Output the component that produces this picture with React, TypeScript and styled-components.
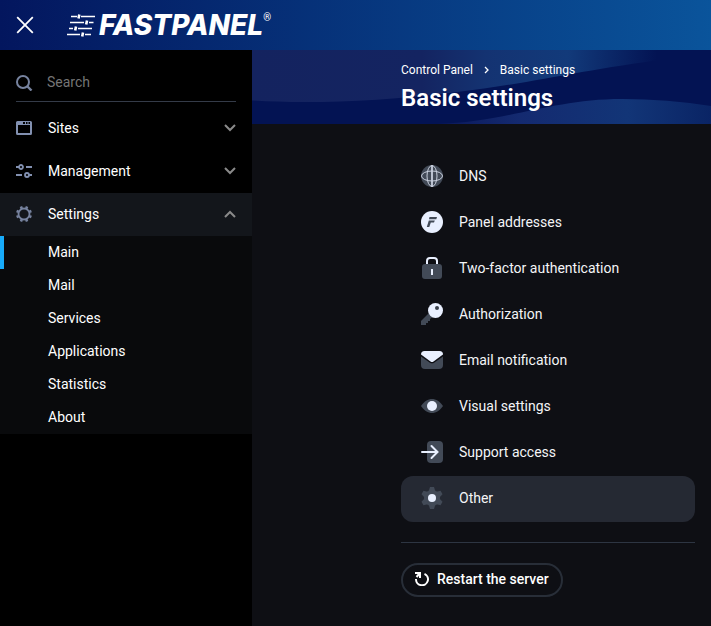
import React from "react";
import styled, { createGlobalStyle } from "styled-components";

const Global = createGlobalStyle`
  *, *::before, *::after { box-sizing: border-box; }
  body {
    margin: 0;
    background: #0e0f14;
    color: #fff;
    font-family: Roboto, "Liberation Sans", sans-serif;
    font-size: 14px;
    line-height: 20px;
  }
  ul, ol { list-style: none; margin: 0; padding: 0; }
  a { color: inherit; text-decoration: none; }
  button { font: inherit; color: inherit; background: none; border: 0; padding: 0; cursor: pointer; }
  svg { display: block; flex: none; }
`;

const Page = styled.div`
  min-height: 100vh;
  display: flex;
  flex-direction: column;
`;

const TopBar = styled.header`
  height: 50px;
  flex: none;
  display: flex;
  align-items: center;
  gap: 33px;
  padding: 0 16px;
  background: linear-gradient(90deg, #03165e 0%, #0a549b 100%);
`;

const Logo = styled.a`
  display: flex;
  align-items: center;
  color: #fff;
`;

const LogoText = styled.span`
  margin-left: 4px;
  font-family: Inter, "Liberation Sans", sans-serif;
  font-size: 28px;
  line-height: 34px;
  font-weight: 800;
  font-style: italic;
`;

const Registered = styled.span`
  align-self: flex-start;
  font-size: 10px;
  line-height: 20px;
`;

const Body = styled.div`
  flex: 1;
  display: flex;
`;

const Sidebar = styled.aside`
  width: 252px;
  flex: none;
  padding-top: 12px;
  background: #000;
`;

const SearchBox = styled.label`
  display: flex;
  align-items: center;
  gap: 14px;
  height: 40px;
  margin: 0 16px 5px;
  border-bottom: 1px solid #343b48;
`;

const SearchInput = styled.input`
  flex: 1;
  min-width: 0;
  padding: 0;
  border: 0;
  outline: 0;
  background: none;
  color: #fff;
  font: inherit;
  &::placeholder { color: #757575; opacity: 1; }
`;

const NavButton = styled.button<{ $open?: boolean }>`
  display: flex;
  align-items: center;
  gap: 16px;
  width: 100%;
  height: 43px;
  padding: 0 16px 2px;
  text-align: left;
  background: ${(p) => (p.$open ? "#13161b" : "transparent")};
`;

const NavLabel = styled.span`
  flex: 1;
`;

const SubMenu = styled.ul`
  background: #090a0c;
`;

const SubLink = styled.a<{ $active?: boolean }>`
  display: block;
  height: 33px;
  padding-left: 44px;
  line-height: 33px;
  border-left: 4px solid ${(p) => (p.$active ? "#17abfa" : "transparent")};
`;

const Content = styled.div`
  flex: 1;
  min-width: 0;
`;

const Hero = styled.section`
  position: relative;
  height: 74px;
  padding: 10px 16px 0 149px;
  background: #031353;
`;

const Waves = styled.svg`
  position: absolute;
  inset: 0;
  width: 100%;
  height: 100%;
`;

const HeroText = styled.div`
  position: relative;
`;

const Crumbs = styled.ol`
  display: flex;
  align-items: center;
  gap: 10px;
  font-size: 12px;
`;

const Title = styled.h1`
  margin: 2px 0 0;
  font-size: 24px;
  line-height: 32px;
  font-weight: 600;
`;

const Main = styled.main`
  padding: 30px 16px 28px 149px;
`;

const OptionLink = styled.a<{ $active?: boolean }>`
  display: flex;
  align-items: center;
  gap: 16px;
  height: 46px;
  padding: 0 20px 2px;
  border-radius: 12px;
  color: #f4f5f7;
  background: ${(p) => (p.$active ? "#252933" : "transparent")};
`;

const Divider = styled.hr`
  height: 1px;
  margin: 20px 0;
  border: 0;
  background: #2d3542;
`;

const RestartButton = styled.button`
  display: flex;
  align-items: center;
  gap: 8px;
  height: 34px;
  padding: 0 12px 2px;
  border: 2px solid #282e38;
  border-radius: 17px;
  font-weight: 500;
`;

const Chevron = ({ up }: { up?: boolean }) => (
  <svg width="12" height="8" viewBox="0 0 12 8" fill="none" stroke="#8a8a8a" strokeWidth="2">
    <path d={up ? "M1 7L6 2l5 5" : "M1 1l5 5 5-5"} />
  </svg>
);

const SearchIcon = () => (
  <svg width="17" height="18" viewBox="0 0 17 18" fill="none" stroke="#77839f" strokeWidth="2">
    <circle cx="7" cy="9" r="6" />
    <path d="M11.500 13.500l4 4" strokeWidth="2.400" />
  </svg>
);

const SitesIcon = () => (
  <svg width="16" height="16" viewBox="0 0 16 16">
    <path
      fill="#8290b0"
      fillRule="evenodd"
      d="M1.500 1h13A1.500 1.500 0 0 1 16 2.500v11a1.500 1.500 0 0 1-1.500 1.500h-13A1.500 1.500 0 0 1 0 13.500v-11A1.500 1.500 0 0 1 1.500 1zM2 5v8h12V5z"
    />
    <path fill="#000" d="M7 2h2v2H7zM10 2h1.500v2H10zM12.500 2H14v2h-1.500z" />
  </svg>
);

const SlidersIcon = () => (
  <svg width="16" height="16" viewBox="0 0 16 16" fill="none" stroke="#8290b0" strokeWidth="1.800">
    <circle cx="5" cy="4" r="2" />
    <circle cx="11" cy="12" r="2" />
    <path d="M0 4h3M10 4h6M0 12h6M13 12h3" />
  </svg>
);

const CogIcon = () => (
  <svg width="16" height="16" viewBox="0 0 16 16" fill="none" stroke="#77839f">
    <circle cx="8" cy="8" r="5.500" strokeWidth="1.800" />
    <g strokeWidth="2.600">
      {[22.5, 67.5, 112.5, 157.5, 202.5, 247.5, 292.5, 337.5].map((a) => (
        <path key={a} d="M8 0v2.500" transform={`rotate(${a} 8 8)`} />
      ))}
    </g>
  </svg>
);

const light = "#e9f0ff";
const slate = "#424a57";

const icons: Record<string, React.ReactNode> = {
  dns: (
    <>
      <circle cx="11" cy="11" r="11" fill={slate} />
      <g fill="none" stroke="#c9d0de" strokeWidth="1">
        <ellipse cx="11" cy="11" rx="5" ry="10.500" />
        <ellipse cx="11" cy="11" rx="10.500" ry="5" />
        <path d="M11 0v22" strokeWidth="1.800" />
      </g>
    </>
  ),
  panel: (
    <>
      <circle cx="11" cy="11" r="11" fill={light} />
      <path d="M8.500 6H16l-.7 2.200H8zM7.800 9.400h6l-.8 2.200H9.800L8.300 16H5.800z" fill={slate} />
    </>
  ),
  lock: (
    <>
      <path d="M6 8V4a3 3 0 0 1 3-3h4a3 3 0 0 1 3 3v4" fill="none" stroke={light} strokeWidth="2" />
      <rect x="1" y="7" width="20" height="15" rx="3" fill={slate} />
      <path d="M10 12h2v6h-2z" fill={light} />
    </>
  ),
  key: (
    <>
      <path d="M8 10l4 4-3 2v2H7v2H5v2H0v-4z" fill={slate} />
      <circle cx="14.500" cy="7.500" r="7.500" fill={light} />
      <circle cx="16" cy="5" r="2" fill="#39404c" />
    </>
  ),
  mail: (
    <>
      <path d="M0 7.500l9 6.200q2 1.300 4 0l9-6.200V16a4 4 0 0 1-4 4H4a4 4 0 0 1-4-4z" fill={slate} />
      <path d="M0 5.500A3.500 3.500 0 0 1 3.500 2h15A3.500 3.500 0 0 1 22 5.500l-9.500 7q-1.500 1-3 0z" fill={light} />
    </>
  ),
  eye: (
    <>
      <path d="M0 11C3 6.500 7 4 11 4s8 2.500 11 7c-3 4.500-7 7-11 7S3 15.500 0 11z" fill={slate} />
      <circle cx="11" cy="11" r="5" fill={light} />
    </>
  ),
  access: (
    <>
      <rect x="6" y="0" width="16" height="22" rx="4" fill={slate} />
      <path d="M1 11h15M10.500 5l6 6-6 6" fill="none" stroke={light} strokeWidth="2" strokeLinecap="round" />
    </>
  ),
  gear: (
    <>
      <circle cx="11" cy="11" r="8" fill={slate} />
      {[0, 60, 120, 180, 240, 300].map((a) => (
        <path key={a} d="M9 0h4l1.500 5h-7z" fill={slate} transform={`rotate(${a} 11 11)`} />
      ))}
      <circle cx="11" cy="11" r="4" fill={light} />
    </>
  ),
};

const navItems = [
  { label: "Sites", icon: <SitesIcon /> },
  { label: "Management", icon: <SlidersIcon /> },
  { label: "Settings", icon: <CogIcon />, open: true },
];

const subItems = ["Main", "Mail", "Services", "Applications", "Statistics", "About"];

const options = [
  ["dns", "DNS"],
  ["panel", "Panel addresses"],
  ["lock", "Two-factor authentication"],
  ["key", "Authorization"],
  ["mail", "Email notification"],
  ["eye", "Visual settings"],
  ["access", "Support access"],
  ["gear", "Other"],
];

export default function App() {
  return (
    <Page>
      <Global />
      <TopBar>
        <button type="button" aria-label="Close menu">
          <svg width="18" height="18" viewBox="0 0 18 18" stroke="#fff" strokeWidth="1.800">
            <path d="M1.200 1.200l15.600 15.600M16.800 1.200L1.200 16.800" />
          </svg>
        </button>
        <Logo href="#" aria-label="FASTPANEL">
          <svg width="28" height="24" viewBox="0 0 28 24" fill="none" stroke="#fff">
            <path
              strokeWidth="1.600"
              d="M4 3.500h6M14 3.500h14M3 9.500h14M22 9.500h4.500M2 15.500h4M11 15.500h14M0 21.500h13M18 21.500h6"
            />
            <path strokeWidth="2.600" d="M12.300 1.500l-.8 4M20 7.500l-.8 4M9 13.500l-.8 4M16 19.500l-.8 4" />
          </svg>
          <LogoText>FASTPANEL</LogoText>
          <Registered>®</Registered>
        </Logo>
      </TopBar>
      <Body>
        <Sidebar>
          <SearchBox>
            <SearchIcon />
            <SearchInput type="search" placeholder="Search" aria-label="Search" />
          </SearchBox>
          <nav>
            {navItems.map((item) => (
              <React.Fragment key={item.label}>
                <NavButton type="button" $open={item.open} aria-expanded={!!item.open}>
                  {item.icon}
                  <NavLabel>{item.label}</NavLabel>
                  <Chevron up={item.open} />
                </NavButton>
                {item.open && (
                  <SubMenu>
                    {subItems.map((s) => (
                      <li key={s}>
                        <SubLink href="#" $active={s === "Main"}>{s}</SubLink>
                      </li>
                    ))}
                  </SubMenu>
                )}
              </React.Fragment>
            ))}
          </nav>
        </Sidebar>
        <Content>
          <Hero>
            <Waves viewBox="0 0 459 74" preserveAspectRatio="none" aria-hidden="true">
              <defs>
                <linearGradient id="waveTop" gradientUnits="userSpaceOnUse" x1="0" y1="0" x2="405" y2="0">
                  <stop offset="0" stopColor="#14235f" />
                  <stop offset=".42" stopColor="#142461" />
                  <stop offset=".58" stopColor="#143372" />
                  <stop offset=".78" stopColor="#123a7a" />
                  <stop offset="1" stopColor="#031353" />
                </linearGradient>
                <linearGradient id="waveBottom" gradientUnits="userSpaceOnUse" x1="190" y1="0" x2="500" y2="0">
                  <stop offset="0" stopColor="#0b195b" />
                  <stop offset=".25" stopColor="#142a70" />
                  <stop offset=".6" stopColor="#123577" />
                  <stop offset="1" stopColor="#061c5c" />
                </linearGradient>
              </defs>
              <path d="M0 0H415V9C330 20 275 34 205 42C125 52 55 54 0 50.500z" fill="url(#waveTop)" />
              <path d="M185 74C255 72 300 49 370 49Q415 49 459 56V74z" fill="url(#waveBottom)" />
            </Waves>
            <HeroText>
              <nav aria-label="Breadcrumb">
                <Crumbs>
                  <li><a href="#">Control Panel</a></li>
                  <li aria-hidden="true">
                    <svg width="7" height="8" viewBox="0 0 7 8" fill="none" stroke="#fff" strokeWidth="1.300">
                      <path d="M2 1l3 3-3 3" />
                    </svg>
                  </li>
                  <li aria-current="page">Basic settings</li>
                </Crumbs>
              </nav>
              <Title>Basic settings</Title>
            </HeroText>
          </Hero>
          <Main>
            <ul>
              {options.map(([key, label]) => (
                <li key={key}>
                  <OptionLink href="#" $active={key === "gear"}>
                    <svg width="22" height="22" viewBox="0 0 22 22">{icons[key]}</svg>
                    {label}
                  </OptionLink>
                </li>
              ))}
            </ul>
            <Divider />
            <RestartButton type="button">
              <svg width="14" height="14" viewBox="0 0 14 14" fill="none" stroke="#fff" strokeWidth="2">
                <path d="M9.500 1.800A6 6 0 1 1 1 7" />
                <path d="M0 1h5v5" />
                <path d="M5 1L1.500 5" />
              </svg>
              Restart the server
            </RestartButton>
          </Main>
        </Content>
      </Body>
    </Page>
  );
}
